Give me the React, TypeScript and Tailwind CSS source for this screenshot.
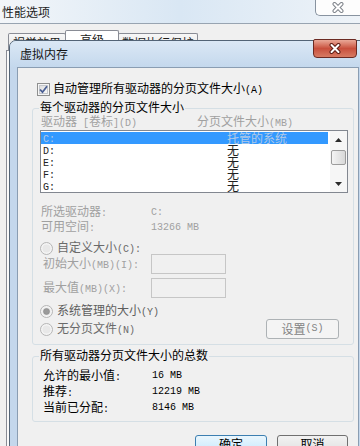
import React from 'react';

// ascii runs are drawn half-width, like the SimSun latin glyphs in the shot
function T({ s }: { s: string }) {
   const parts = s.split(/([\x20-\x7e]+)/);
   return (
      <>
         {parts.map((p, i) =>
            /[\x20-\x7e]/.test(p) ? (
               <span
                  key={i}
                  className="[font-family:'Liberation_Mono',monospace] text-[10px] whitespace-pre"
               >
                  {p}
               </span>
            ) : (
               p
            )
         )}
      </>
   );
}

function CloseX({ stroke, fill }: { stroke: string; fill: string }) {
   return (
      <svg width="14" height="11" viewBox="0 0 14 11">
         <path d="M3.5 2 L10.5 9 M10.5 2 L3.5 9" stroke={stroke} strokeWidth="4" strokeLinecap="round" />
         <path d="M3.5 2 L10.5 9 M10.5 2 L3.5 9" stroke={fill} strokeWidth="2" strokeLinecap="round" />
      </svg>
   );
}

function Check() {
   return (
      <svg width="13" height="13" viewBox="0 0 13 13">
         <defs>
            <linearGradient id="cbg" x1="0" y1="0" x2="1" y2="1">
               <stop offset="0" stopColor="#dcdcdc" />
               <stop offset="1" stopColor="#fbfbfb" />
            </linearGradient>
         </defs>
         <rect x="0.5" y="0.5" width="12" height="12" fill="#f6f6f6" stroke="#8e8f8f" />
         <rect x="2.5" y="2.5" width="8" height="8" fill="url(#cbg)" stroke="#c4c7cc" />
         <path d="M3 6.5 L5.5 9.2 L10 3.2" stroke="#4a5f94" strokeWidth="1.8" fill="none" />
      </svg>
   );
}

function Radio({ on }: { on?: boolean }) {
   return (
      <svg width="13" height="13" viewBox="0 0 13 13">
         <circle cx="6.5" cy="6.5" r="6" fill="#f4f4f4" stroke="#b5b5b5" />
         <circle cx="6.5" cy="6.5" r="4" fill="#e8e8e8" />
         {on && <circle cx="6.5" cy="6.5" r="3" fill="#9a9a9a" stroke="#8a8a8a" strokeWidth="0.6" />}
      </svg>
   );
}

function Arrow({ up }: { up?: boolean }) {
   return (
      <svg width="7" height="4" viewBox="0 0 7 4">
         <path d={up ? 'M0 4 L3.5 0 L7 4 Z' : 'M0 0 L7 0 L3.5 4 Z'} fill="#2b2b2b" />
      </svg>
   );
}

const drives = [
   { d: 'C:', size: '托管的系统', sel: true },
   { d: 'D:', size: '无' },
   { d: 'E:', size: '无' },
   { d: 'F:', size: '无' },
   { d: 'G:', size: '无' },
];

const totals = [
   { k: '允许的最小值:', v: '16 MB' },
   { k: '推荐:', v: '12219 MB' },
   { k: '当前已分配:', v: '8146 MB' },
];

export default function App() {
   return (
      <div className="relative w-[360px] h-[446px] overflow-hidden bg-[#f0f0f0] text-[12px] leading-[14px] text-[#1a1a1a] [font-family:'Noto_Sans_CJK_SC',sans-serif]">
         {/* 性能选项 window behind */}
         <div className="flex h-[23px] justify-between bg-linear-to-r from-[#f3f6f9] via-[#d9e7f4] to-[#eef3f8]">
            <span className="self-center pl-[2px] text-[#1e1e1e]">性能选项</span>
            <div className="flex h-[16px] w-[45px] items-center justify-center rounded-bl-[5px] border-b border-l border-[#8893a0] bg-[#fdfdfd]">
               <CloseX stroke="#80858c" fill="#ffffff" />
            </div>
         </div>
         <div className="h-px bg-[#98a4b1]" />
         <div className="flex h-[422px] flex-col">
            <div className="mt-[6px] flex items-end pl-[8px]">
               <div className="flex h-[17px] w-[58px] justify-center rounded-t-[2px] border border-b-0 border-[#898c95] bg-linear-to-b from-[#f7f7f7] to-[#e4e4e4] pt-[2px]">
                  视觉效果
               </div>
               <div className="-ml-px flex h-[20px] w-[54px] justify-center rounded-t-[2px] border border-b-0 border-[#898c95] bg-white pt-[2px]">
                  高级
               </div>
               <div className="-ml-px flex h-[17px] w-[80px] justify-center rounded-t-[2px] border border-b-0 border-[#898c95] bg-linear-to-b from-[#f7f7f7] to-[#e4e4e4] pt-[2px]">
                  数据执行保护
               </div>
            </div>
            <div className="ml-[6px] flex-1 border-l border-t border-[#898c95] bg-[#fafafa]" />
         </div>

         {/* 虚拟内存 dialog */}
         <div className="absolute left-[9px] top-[40px] flex h-[430px] w-[358px] flex-col rounded-t-[7px] border border-[#536476] bg-[#c4d7ec]">
            <div className="flex h-[26px] justify-between rounded-t-[6px] bg-linear-to-b from-[#dbe8f5] to-[#c4d8ed]">
               <span className="self-center pl-[10px] text-[#141414]">虚拟内存</span>
               <div className="-mt-[2px] mr-[9px] flex h-[19px] w-[44px] items-center justify-center rounded-[4px] rounded-t-[2px] border border-[#6b2a22] bg-linear-to-b from-[#e9a898] via-[#c84f3d] to-[#d77a62]">
                  <CloseX stroke="#5e1d15" fill="#ffffff" />
               </div>
            </div>

            <div className="mx-[7px] flex flex-1 flex-col border border-[#8a9db2] bg-[#f0f0f0]">
               <div className="mt-[13px] flex h-[16px] items-center gap-[3px] pl-[19px]">
                  <Check />
                  <span className="text-black">
                     <T s="自动管理所有驱动器的分页文件大小(A)" />
                  </span>
               </div>

               {/* per-drive group */}
               <div className="relative ml-[14px] mr-[4px] mt-[11px] rounded-[3px] border border-[#d5dfe5] pb-[5px]">
                  <span className="absolute -top-[9px] left-[6px] bg-[#f0f0f0] px-[1px] text-black">
                     每个驱动器的分页文件大小
                  </span>
                  <div className="mt-[6px] flex h-[14px] items-center pl-[8px] text-[#a0a0a0]">
                     <span className="w-[156px]">
                        <T s="驱动器 [卷标](D)" />
                     </span>
                     <span>
                        <T s="分页文件大小(MB)" />
                     </span>
                  </div>
                  <div className="ml-[7px] mr-[5px] mt-[1px] flex h-[63px] border border-[#828790] bg-white">
                     <div className="flex-1 pr-[2px] pt-[1px]">
                        {drives.map((r) => (
                           <div
                              key={r.d}
                              className={`flex h-[12px] items-center ${
                                 r.sel ? 'bg-[#3399ff] text-[#b2c9e6]' : 'text-[#222222]'
                              }`}
                           >
                              <span className="w-[186px] pl-[2px]">
                                 <T s={r.d} />
                              </span>
                              <span>{r.size}</span>
                           </div>
                        ))}
                     </div>
                     <div className="flex w-[17px] flex-col bg-[#f6f6f6]">
                        <div className="flex h-[18px] items-center justify-center">
                           <Arrow up />
                        </div>
                        <div className="mx-[1px] mt-[1px] h-[15px] rounded-[2px] border border-[#9c9c9c] bg-linear-to-r from-[#f4f4f4] to-[#d8d8d8]" />
                        <div className="flex-1" />
                        <div className="flex h-[17px] items-center justify-center">
                           <Arrow />
                        </div>
                     </div>
                  </div>

                  <div className="mt-[12px] text-[#a0a0a0]">
                     <div className="flex h-[15px] items-center pl-[8px]">
                        <span className="w-[110px]">
                           <T s="所选驱动器:" />
                        </span>
                        <T s="C:" />
                     </div>
                     <div className="flex h-[15px] items-center pl-[8px]">
                        <span className="w-[110px]">
                           <T s="可用空间:" />
                        </span>
                        <T s="13266 MB" />
                     </div>
                  </div>

                  <div className="mt-[7px] flex h-[12px] items-center gap-[4px] pl-[7px] text-[#6a6a6a]">
                     <Radio />
                     <span>
                        <T s="自定义大小(C):" />
                     </span>
                  </div>
                  <div className="flex h-[20px] items-center pl-[10px] text-[#a0a0a0]">
                     <span className="w-[108px]">
                        <T s="初始大小(MB)(I):" />
                     </span>
                     <div className="h-[20px] w-[75px] border border-[#c6c6c6] bg-[#f0f0f0]" />
                  </div>
                  <div className="mt-[4px] flex h-[20px] items-center pl-[10px] text-[#a0a0a0]">
                     <span className="w-[108px]">
                        <T s="最大值(MB)(X):" />
                     </span>
                     <div className="h-[20px] w-[75px] border border-[#c6c6c6] bg-[#f0f0f0]" />
                  </div>
                  <div className="mt-[7px] flex h-[12px] items-center gap-[4px] pl-[7px] text-[#5e5e5e]">
                     <Radio on />
                     <span>
                        <T s="系统管理的大小(Y)" />
                     </span>
                  </div>
                  <div className="mt-[2px] flex h-[20px] items-center justify-between pl-[7px] pr-[14px]">
                     <div className="flex items-center gap-[4px] text-[#6a6a6a]">
                        <Radio />
                        <span>
                           <T s="无分页文件(N)" />
                        </span>
                     </div>
                     <div className="flex h-[20px] w-[73px] items-center justify-center rounded-[3px] border border-[#adb2b5] bg-[#f4f4f4] text-[#838383]">
                        <T s="设置(S)" />
                     </div>
                  </div>
               </div>

               {/* totals group */}
               <div className="relative ml-[14px] mr-[4px] mt-[11px] rounded-[3px] border border-[#d5dfe5] pb-[5px]">
                  <span className="absolute -top-[9px] left-[6px] bg-[#f0f0f0] px-[1px] text-black">
                     所有驱动器分页文件大小的总数
                  </span>
                  <div className="mt-[11px] text-black">
                     {totals.map((t) => (
                        <div key={t.k} className="flex h-[16px] items-center pl-[10px]">
                           <span className="w-[109px]">
                              <T s={t.k} />
                           </span>
                           <T s={t.v} />
                        </div>
                     ))}
                  </div>
               </div>

               <div className="mt-[13px] flex justify-end gap-[10px] pr-[10px]">
                  <div className="flex h-[22px] w-[72px] justify-center rounded-[3px] border border-[#3c7fb1] bg-linear-to-b from-[#eaf6fd] to-[#bee6fd] pt-[1px] text-black">
                     确定
                  </div>
                  <div className="flex h-[22px] w-[71px] justify-center rounded-[3px] border border-[#707070] bg-linear-to-b from-[#f2f2f2] to-[#dddddd] pt-[1px] text-black">
                     取消
                  </div>
               </div>
            </div>
         </div>
      </div>
   );
}
